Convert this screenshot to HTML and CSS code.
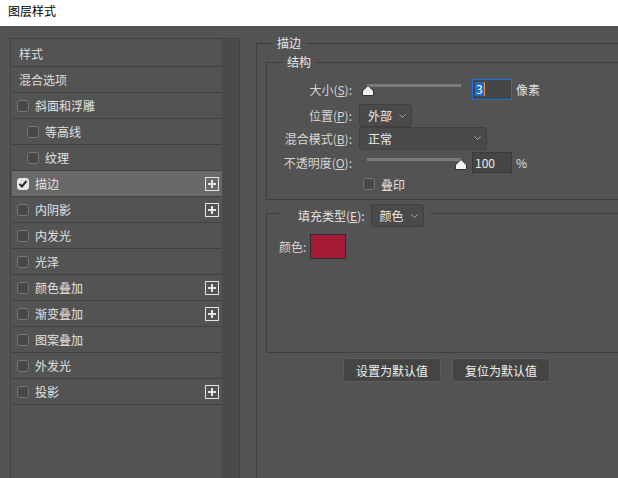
FILE: index.html
```html
<!DOCTYPE html>
<html lang="zh-CN">
<head>
<meta charset="utf-8">
<title>图层样式</title>
<link rel="stylesheet" href="styles.css">
</head>
<body>
<div class="titlebar">图层样式</div>
<div class="main">
  <div class="styles-panel">
    <ul class="style-list">
      <li class="row row-head">样式</li>
      <li class="row row-head">混合选项</li>
      <li class="row"><span class="cb"></span><span>斜面和浮雕</span></li>
      <li class="row indent"><span class="cb"></span><span>等高线</span></li>
      <li class="row indent"><span class="cb"></span><span>纹理</span></li>
      <li class="row selected"><span class="cb checked"><svg width="10" height="10" viewBox="0 0 10 10"><path d="M1.5 5 L4 7.5 L8.5 2" fill="none" stroke="#2b2b2b" stroke-width="2"/></svg></span><span>描边</span><span class="plus"><svg width="14" height="14" viewBox="0 0 14 14"><rect x="0.5" y="0.5" width="13" height="13" fill="none" stroke="#e4e4e4"/><path d="M7 3v8M3 7h8" stroke="#e4e4e4" stroke-width="2"/></svg></span></li>
      <li class="row"><span class="cb"></span><span>内阴影</span><span class="plus"><svg width="14" height="14" viewBox="0 0 14 14"><rect x="0.5" y="0.5" width="13" height="13" fill="none" stroke="#e4e4e4"/><path d="M7 3v8M3 7h8" stroke="#e4e4e4" stroke-width="2"/></svg></span></li>
      <li class="row"><span class="cb"></span><span>内发光</span></li>
      <li class="row"><span class="cb"></span><span>光泽</span></li>
      <li class="row"><span class="cb"></span><span>颜色叠加</span><span class="plus"><svg width="14" height="14" viewBox="0 0 14 14"><rect x="0.5" y="0.5" width="13" height="13" fill="none" stroke="#e4e4e4"/><path d="M7 3v8M3 7h8" stroke="#e4e4e4" stroke-width="2"/></svg></span></li>
      <li class="row"><span class="cb"></span><span>渐变叠加</span><span class="plus"><svg width="14" height="14" viewBox="0 0 14 14"><rect x="0.5" y="0.5" width="13" height="13" fill="none" stroke="#e4e4e4"/><path d="M7 3v8M3 7h8" stroke="#e4e4e4" stroke-width="2"/></svg></span></li>
      <li class="row"><span class="cb"></span><span>图案叠加</span></li>
      <li class="row"><span class="cb"></span><span>外发光</span></li>
      <li class="row"><span class="cb"></span><span>投影</span><span class="plus"><svg width="14" height="14" viewBox="0 0 14 14"><rect x="0.5" y="0.5" width="13" height="13" fill="none" stroke="#e4e4e4"/><path d="M7 3v8M3 7h8" stroke="#e4e4e4" stroke-width="2"/></svg></span></li>
    </ul>
    <div class="scroll"></div>
  </div>

  <div class="settings">
    <fieldset class="group outer">
      <legend class="outer-legend">描边</legend>
      <fieldset class="group structure">
        <legend class="structure-legend">结构</legend>
        <div class="frow r1">
          <span class="flabel">大小(<u>S</u>):</span>
          <div class="slider">
            <div class="track"></div>
            <svg class="thumb thumb-start" width="12" height="11" viewBox="0 0 12 11"><path d="M6 0.5 L11.5 6 V10.5 H0.5 V6 Z" fill="#f2f2f2" stroke="#333" stroke-width="1" stroke-linejoin="round"/></svg>
          </div>
          <div class="num focused"><span class="sel-text">3</span><span class="caret"></span></div>
          <span class="unit">像素</span>
        </div>
        <div class="frow r2">
          <span class="flabel">位置(<u>P</u>):</span>
          <div class="dropdown dd-pos"><span>外部</span><svg width="7" height="4" viewBox="0 0 7 4"><path d="M0.5 0.5 L3.5 3.5 L6.5 0.5" fill="none" stroke="#a8a8a8"/></svg></div>
        </div>
        <div class="frow r3">
          <span class="flabel">混合模式(<u>B</u>):</span>
          <div class="dropdown dd-blend"><span>正常</span><svg width="7" height="4" viewBox="0 0 7 4"><path d="M0.5 0.5 L3.5 3.5 L6.5 0.5" fill="none" stroke="#a8a8a8"/></svg></div>
        </div>
        <div class="frow r4">
          <span class="flabel">不透明度(<u>O</u>):</span>
          <div class="slider">
            <div class="track"></div>
            <svg class="thumb thumb-end" width="12" height="11" viewBox="0 0 12 11"><path d="M6 0.5 L11.5 6 V10.5 H0.5 V6 Z" fill="#f2f2f2" stroke="#333" stroke-width="1" stroke-linejoin="round"/></svg>
          </div>
          <div class="num"><span>100</span></div>
          <span class="unit">%</span>
        </div>
        <div class="frow r5">
          <span class="cb overprint"></span><span class="cb-text">叠印</span>
        </div>
      </fieldset>

      <fieldset class="group fill">
        <legend class="fill-legend"><span class="fill-label">填充类型(<u>E</u>):</span><span class="dropdown dd-fill"><span>颜色</span><svg width="7" height="4" viewBox="0 0 7 4"><path d="M0.5 0.5 L3.5 3.5 L6.5 0.5" fill="none" stroke="#a8a8a8"/></svg></span></legend>
        <div class="color-row"><span class="color-label">颜色:</span><span class="swatch"></span></div>
      </fieldset>

      <div class="buttons">
        <button class="btn">设置为默认值</button>
        <button class="btn">复位为默认值</button>
      </div>
    </fieldset>
  </div>
</div>
</body>
</html>
```

FILE: styles.css
```css
* { box-sizing: border-box; }

body {
  margin: 0;
  width: 618px;
  height: 478px;
  overflow: hidden;
  background: #535353;
  font-family: "Noto Sans CJK SC", "Noto Sans", sans-serif;
  font-size: 12px;
  color: #e2e2e2;
}

u { text-decoration: underline; text-underline-offset: 1px; }

.titlebar {
  height: 26px;
  background: #ffffff;
  color: #000000;
  line-height: 22px;
  padding-left: 8px;
}

.main {
  display: flex;
  align-items: flex-start;
  height: 452px;
  overflow: hidden;
}

/* ---------- left list ---------- */
.styles-panel {
  margin: 12px 0 0 10px;
  width: 230px;
  height: 440px;
  border: 1px solid #414141;
  border-bottom: 0;
  display: flex;
}

.style-list {
  list-style: none;
  margin: 0;
  padding: 2px 0 0 1px;
  width: 211px;
}

.row {
  height: 26px;
  border-bottom: 1px solid #404040;
  display: flex;
  align-items: center;
  gap: 6px;
  padding: 0 3px 0 5px;
  line-height: 14px;
}

.row-head { padding-left: 7px; color: #dcdcdc; }
.indent { padding-left: 15px; }
.selected { background: #696969; }

.cb {
  flex-shrink: 0;
  width: 12px;
  height: 12px;
  border: 1px solid #767676;
  border-radius: 3px;
  background: #474747;
  display: flex;
  align-items: center;
  justify-content: center;
}

.cb.checked {
  background: #e8e8e8;
  border-color: #e8e8e8;
}

.plus {
  margin-left: auto;
  width: 14px;
  height: 14px;
  display: flex;
}

.scroll {
  width: 17px;
  margin-left: auto;
  align-self: stretch;
  background: #4a4a4a;
}

/* ---------- right settings ---------- */
.settings {
  flex: 1;
  min-width: 0;
  height: 452px;
  margin-left: 16px;
  padding-top: 10px;
  overflow: hidden;
}

.group {
  margin: 0;
  padding: 0;
  min-width: 0;
  border: 1px solid #3e3e3e;
  border-right: 0;
}

legend {
  padding: 0 5px;
  line-height: 14px;
  color: #e8e8e8;
}

.outer {
  height: 100%;
  padding-left: 9px;
  border-bottom: 0;
}

.outer-legend { margin-left: 6px; }

.structure {
  margin-top: 5px;
  padding-bottom: 8px;
}

.structure-legend { margin-left: 15px; }

.frow {
  display: flex;
  align-items: center;
}

.flabel {
  flex-shrink: 0;
  width: 85px;
  text-align: right;
  color: #d6d6d6;
}

.r1 { margin-top: 9px; height: 22px; }
.r2 { margin-top: 4px; height: 23px; }
.r3 { height: 22px; }
.r4 { margin-top: 3px; height: 21px; }
.r5 { margin-top: 4px; height: 14px; }

.slider {
  position: relative;
  align-self: flex-start;
  width: 105px;
  height: 20px;
  margin-left: 10px;
}

.track {
  margin: 6px 0 0 5px;
  width: 94px;
  height: 3px;
  background: #7a7a7a;
}

.thumb {
  position: absolute;
  top: 7px;
}
.thumb-start { left: 0; }
.thumb-end { right: 0; }

.num {
  margin-left: 5px;
  width: 40px;
  height: 21px;
  border: 1px solid #3a3a3a;
  background: #454545;
  padding-left: 2px;
  display: flex;
  align-items: center;
  color: #ececec;
  line-height: 14px;
}

.num.focused { border-color: #1a72e4; }

.sel-text {
  background: #1c6ad6;
  color: #ffffff;
  padding: 0 1px;
}

.caret {
  width: 1px;
  height: 14px;
  background: #f0922e;
}

.unit {
  margin-left: 4px;
  color: #e0e0e0;
}

.dropdown {
  margin-left: 7px;
  height: 23px;
  border: 1px solid #404040;
  border-radius: 3px;
  background: #4a4a4a;
  display: flex;
  align-items: center;
  justify-content: space-between;
  padding: 0 5px 0 8px;
  color: #ececec;
}

.dd-pos { width: 53px; }
.dd-blend { width: 128px; }

.overprint { margin-left: 96px; }
.cb-text { margin-left: 6px; color: #e2e2e2; }

.fill {
  margin-top: 4px;
  padding: 0 0 93px 12px;
}

.fill-legend {
  margin-left: 2px;
  padding: 0 6px 0 17px;
  height: 19px;
  display: flex;
  align-items: flex-start;
}

.fill-label {
  color: #e2e2e2;
  line-height: 23px;
}

.dd-fill {
  flex-shrink: 0;
  width: 53px;
  margin-left: 6px;
}

.color-row {
  margin-top: 11px;
  display: flex;
  align-items: center;
  gap: 4px;
  color: #d6d6d6;
}

.swatch {
  width: 36px;
  height: 25px;
  border: 1px solid #2f2f2f;
  background: #a51a35;
}

.buttons {
  display: flex;
  gap: 11px;
  margin-top: 5px;
  padding-left: 77px;
}

.btn {
  width: 98px;
  height: 24px;
  padding: 0;
  background: #444444;
  border: 1px solid #5c5c5c;
  border-radius: 3px;
  color: #f0f0f0;
  font: inherit;
}
```
